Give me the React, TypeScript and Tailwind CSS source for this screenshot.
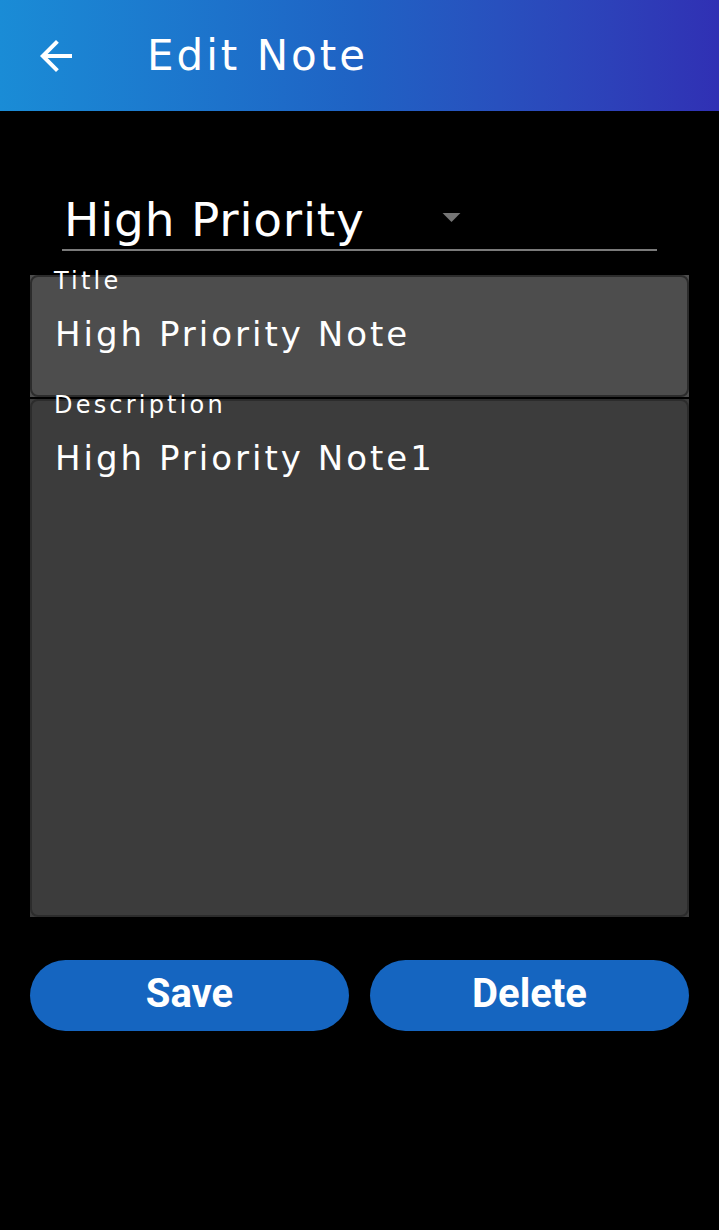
const ArrowBack = () => (
  <svg width="48" height="48" viewBox="0 0 24 24" fill="white">
    <path d="M20 11H7.83l5.59-5.59L12 4l-8 8 8 8 1.41-1.41L7.83 13H20v-2z" />
  </svg>
);

const DropArrow = () => (
  <svg width="43" height="43" viewBox="0 0 24 24" fill="#757575">
    <path d="M7 10l5 5 5-5z" />
  </svg>
);

const Field = ({ label, value, fill, height }: { label: string; value: string; fill: string; height: string }) => (
  <div className={`relative ${fill} ${height}`}>
    <div className="absolute inset-0 rounded-lg border-2 border-[#2c2c2c]" />
    <span
      className="absolute left-[24px] top-[-6px] text-[24px] leading-none tracking-[3.2px] text-white"
      style={{ fontFamily: '"DejaVu Sans", sans-serif' }}
    >
      {label}
    </span>
    <p
      className="pl-[25px] pt-[42px] text-[34px] leading-none tracking-[3px] text-white"
      style={{ fontFamily: '"DejaVu Sans", sans-serif' }}
    >
      {value}
    </p>
  </div>
);

export default function App() {
  return (
    <div className="min-h-[1230px] w-full bg-black" style={{ fontFamily: '"DejaVu Sans", sans-serif' }}>
      <header className="flex h-[111px] items-center bg-linear-to-r from-[#1a8cd6] via-[#1f62c4] to-[#3030b4] pl-[32px]">
        <ArrowBack />
        <h1 className="ml-[67px] text-[42px] leading-none tracking-[3px] text-white">Edit Note</h1>
      </header>

      <div className="ml-[62px] mt-[85px] w-[595px] border-b-2 border-[#7a7a7a] pb-[6px]">
        <div className="flex items-start">
          <span className="w-[368px] pl-[2px] text-[47px] leading-none tracking-[0.8px] text-white">High Priority</span>
          <div className="-mt-[1px]">
            <DropArrow />
          </div>
        </div>
      </div>

      <div className="mx-[30px] mt-[24px] flex flex-col gap-[2px]">
        <Field label="Title" value="High Priority Note" fill="bg-[#4d4d4d]" height="h-[122px]" />
        <Field label="Description" value="High Priority Note1" fill="bg-[#3c3c3c]" height="h-[518px]" />
      </div>

      <div className="mx-[30px] mt-[43px] flex gap-[21px]">
        <button
          className="flex h-[71px] flex-1 items-center justify-center rounded-full bg-[#1565c0] pb-[3px] text-[40px] font-bold text-white"
          style={{ fontFamily: 'Roboto, sans-serif' }}
        >
          Save
        </button>
        <button
          className="flex h-[71px] flex-1 items-center justify-center rounded-full bg-[#1565c0] pb-[3px] text-[40px] font-bold text-white"
          style={{ fontFamily: 'Roboto, sans-serif' }}
        >
          Delete
        </button>
      </div>
    </div>
  );
}
